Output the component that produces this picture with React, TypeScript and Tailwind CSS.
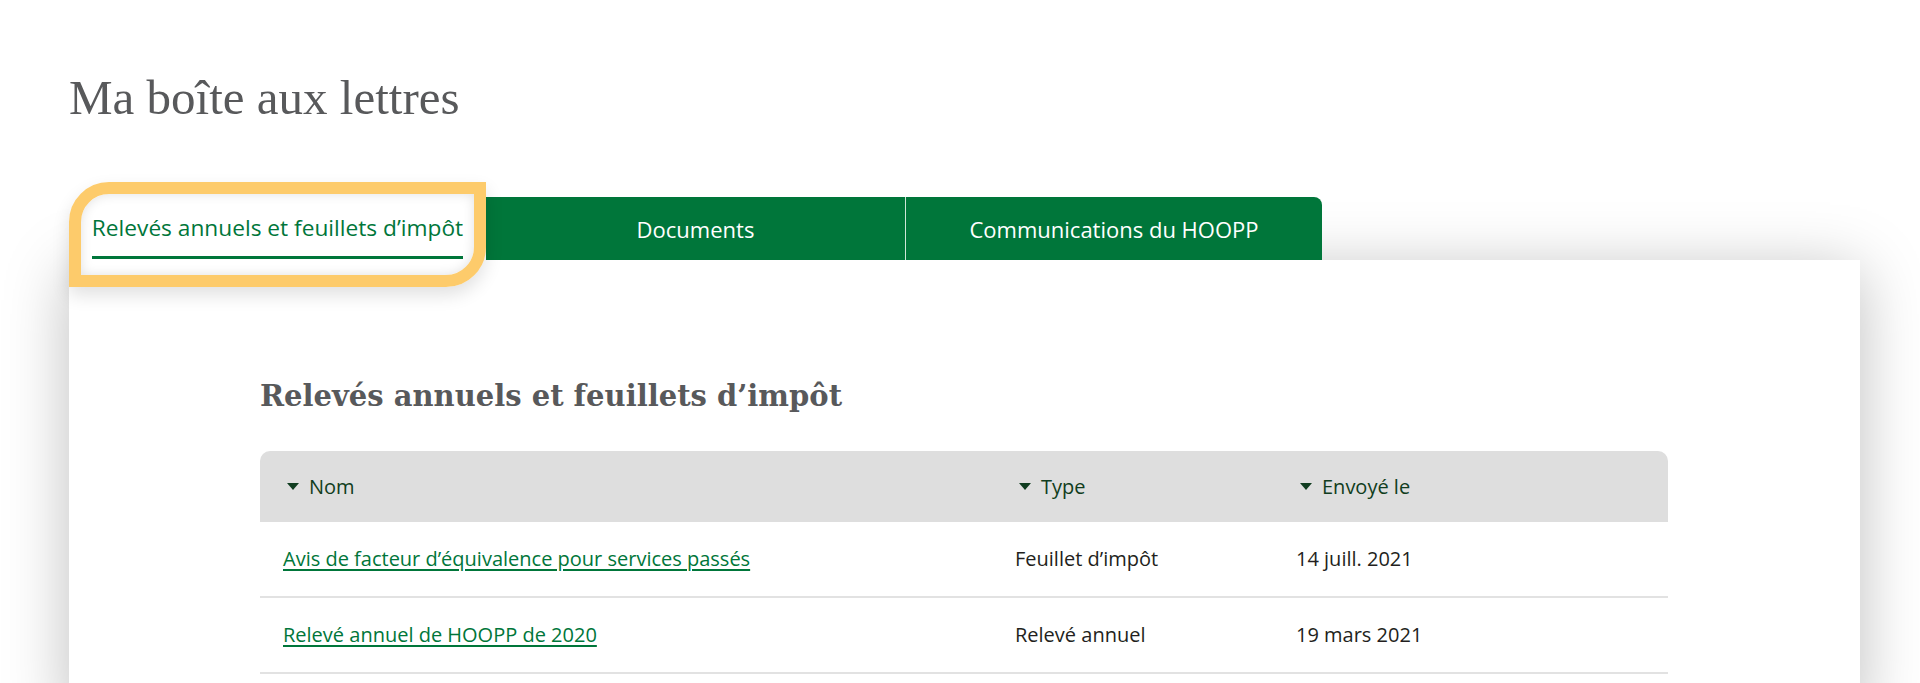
import type { ReactNode } from 'react';

type Row = { name: string; type: string; sent: string };

const rows: Row[] = [
  { name: 'Avis de facteur d’équivalence pour services passés', type: 'Feuillet d’impôt', sent: '14 juill. 2021' },
  { name: 'Relevé annuel de HOOPP de 2020', type: 'Relevé annuel', sent: '19 mars 2021' },
];

function SortHead({ children }: { children: ReactNode }) {
  return (
    <div className="flex items-center gap-[10px] pl-[27px] text-[#103d20]">
      <svg width="12" height="7" viewBox="0 0 12 7" className="shrink-0">
        <polygon points="0,0 12,0 6,7" fill="currentColor" />
      </svg>
      <span>{children}</span>
    </div>
  );
}

export default function App() {
  return (
    <div className="min-h-[683px] overflow-hidden bg-white font-['Open_Sans',sans-serif]">
      <h1 className="ml-[69px] pt-[73px] font-['Liberation_Serif',serif] text-[49px] leading-none text-[#58595b]">
        Ma boîte aux lettres
      </h1>

      {/* Tabs */}
      <div className="relative z-10 ml-[69px] mt-[75px] flex h-[63px] text-[22px] leading-[30px]">
        <div className="relative flex w-[417px] items-end justify-center bg-white">
          <span className="mb-px border-b-[3px] border-[#00763a] pb-[13px] text-[22.7px] text-[#00763a]">
            Relevés annuels et feuillets d’impôt
          </span>
          <div className="pointer-events-none absolute -top-[15px] -bottom-[27px] left-0 right-0 rounded-tl-[40px] rounded-br-[40px] border-[12px] border-[#fdcb6b] shadow-[inset_0_0_12px_rgba(0,0,0,0.12),0_8px_18px_rgba(0,0,0,0.12)]" />
        </div>
        <div className="flex w-[420px] items-center justify-center border-r border-[#cfe5d7] bg-[#00763a] text-white">
          Documents
        </div>
        <div className="flex w-[416px] items-center justify-center rounded-tr-[8px] bg-[#00763a] text-white">
          Communications du HOOPP
        </div>
      </div>

      {/* Panel */}
      <div className="ml-[69px] w-[1791px] bg-white px-[191px] pb-[40px] pt-[122px] shadow-[0_10px_60px_rgba(0,0,0,0.26)]">
        <h2 className="font-['DejaVu_Serif',serif] text-[29px] font-bold leading-none text-[#58595b]">
          Relevés annuels et feuillets d’impôt
        </h2>

        <div className="mt-[40px] w-[1408px] text-[20px]">
          <div className="grid h-[71px] grid-cols-[732px_281px_395px] items-center rounded-t-[10px] bg-[#dedede]">
            <SortHead>Nom</SortHead>
            <SortHead>Type</SortHead>
            <SortHead>Envoyé le</SortHead>
          </div>
          {rows.map((r) => (
            <div
              key={r.name}
              className="grid h-[76px] grid-cols-[732px_281px_395px] items-center border-b-2 border-[#e2e2e2] text-[#231f20]"
            >
              <a href="#" className="pl-[23px] text-[#00763a] underline underline-offset-[3px]">
                {r.name}
              </a>
              <span className="pl-[23px]">{r.type}</span>
              <span className="pl-[23px]">{r.sent}</span>
            </div>
          ))}
        </div>
      </div>
    </div>
  );
}
